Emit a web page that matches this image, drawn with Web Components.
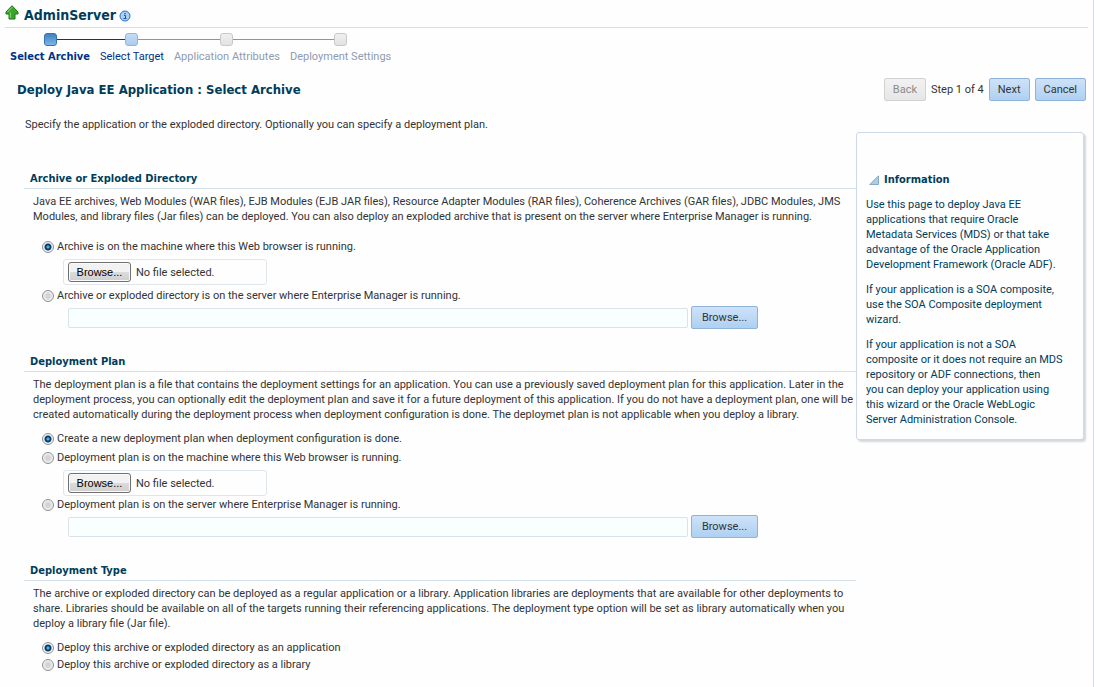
<!DOCTYPE html>
<html lang="en">
<head>
<meta charset="utf-8">
<title>Deploy Java EE Application : Select Archive</title>
<style>
  body {
    --bold-font: "DejaVu Sans Condensed", "DejaVu Sans", sans-serif;
    margin: 0;
    background: #fefefe;
    color: #333;
    font: 11px/15px Roboto, sans-serif;
  }
  .plan { --picker-bottom: 0px; }
  .plan radio-option + radio-option { margin-top: 2px; }
</style>
</head>
<body>

<deploy-page>
  <target-header slot="header">AdminServer</target-header>
  <step-train slot="header"></step-train>
  <wizard-bar slot="header">Deploy Java EE Application : Select Archive</wizard-bar>

  <span slot="intro">Specify the application or the exploded directory. Optionally you can specify a deployment plan.</span>

  <form-section spaced>
    <span slot="title">Archive or Exploded Directory</span>
    <span slot="text">Java EE archives, Web Modules (WAR files), EJB Modules (EJB JAR files), Resource Adapter Modules (RAR files), Coherence Archives (GAR files), JDBC Modules, JMS<br>Modules, and library files (Jar files) can be deployed. You can also deploy an exploded archive that is present on the server where Enterprise Manager is running.</span>
    <radio-option><input type="radio" name="archive" id="archive-local" checked><label slot="label" for="archive-local">Archive is on the machine where this Web browser is running.</label></radio-option>
    <file-picker></file-picker>
    <radio-option><input type="radio" name="archive" id="archive-server"><label slot="label" for="archive-server">Archive or exploded directory is on the server where Enterprise Manager is running.</label></radio-option>
    <server-path label="Archive path on server"></server-path>
  </form-section>

  <form-section class="plan">
    <span slot="title">Deployment Plan</span>
    <span slot="text">The deployment plan is a file that contains the deployment settings for an application. You can use a previously saved deployment plan for this application. Later in the<br>deployment process, you can optionally edit the deployment plan and save it for a future deployment of this application. If you do not have a deployment plan, one will be<br>created automatically during the deployment process when deployment configuration is done. The deploymet plan is not applicable when you deploy a library.</span>
    <radio-option><input type="radio" name="plan" id="plan-new" checked><label slot="label" for="plan-new">Create a new deployment plan when deployment configuration is done.</label></radio-option>
    <radio-option><input type="radio" name="plan" id="plan-local"><label slot="label" for="plan-local">Deployment plan is on the machine where this Web browser is running.</label></radio-option>
    <file-picker></file-picker>
    <radio-option><input type="radio" name="plan" id="plan-server"><label slot="label" for="plan-server">Deployment plan is on the server where Enterprise Manager is running.</label></radio-option>
    <server-path label="Plan path on server"></server-path>
  </form-section>

  <form-section>
    <span slot="title">Deployment Type</span>
    <span slot="text">The archive or exploded directory can be deployed as a regular application or a library. Application libraries are deployments that are available for other deployments to<br>share. Libraries should be available on all of the targets running their referencing applications. The deployment type option will be set as library automatically when you<br>deploy a library file (Jar file).</span>
    <radio-option><input type="radio" name="type" id="type-app" checked><label slot="label" for="type-app">Deploy this archive or exploded directory as an application</label></radio-option>
    <radio-option><input type="radio" name="type" id="type-lib"><label slot="label" for="type-lib">Deploy this archive or exploded directory as a library</label></radio-option>
  </form-section>

  <info-panel slot="aside">
    <span slot="title">Information</span>
    <p>Use this page to deploy Java EE<br>applications that require Oracle<br>Metadata Services (MDS) or that take<br>advantage of the Oracle Application<br>Development Framework (Oracle ADF).</p>
    <p>If your application is a SOA composite,<br>use the SOA Composite deployment<br>wizard.</p>
    <p>If your application is not a SOA<br>composite or it does not require an MDS<br>repository or ADF connections, then<br>you can deploy your application using<br>this wizard or the Oracle WebLogic<br>Server Administration Console.</p>
  </info-panel>
</deploy-page>

<script>
const define = (name, html, setup) => {
  const template = document.createElement('template');
  template.innerHTML = html;
  customElements.define(name, class extends HTMLElement {
    constructor() {
      super();
      this.attachShadow({ mode: 'open' }).append(template.content.cloneNode(true));
    }
    connectedCallback() {
      if (setup) setup(this, this.shadowRoot);
    }
  });
};

define('deploy-page', `
  <style>
    :host { display: block; box-sizing: border-box; min-height: 100vh; border-right: 1px solid #d3dae3; }
    .intro { padding: 17px 25px 0; line-height: 14px; }
    .columns { display: flex; align-items: flex-start; }
    main { flex: 1; min-width: 0; padding: 0 0 0 24px; }
    aside { flex: none; width: 228px; margin: 0 9px 0 0; }
    .sections { display: flex; flex-direction: column; gap: 25px; padding-top: 39px; }
  </style>
  <slot name="header"></slot>
  <div class="intro"><slot name="intro"></slot></div>
  <div class="columns">
    <main><div class="sections"><slot></slot></div></main>
    <aside><slot name="aside"></slot></aside>
  </div>
`);

define('target-header', `
  <style>
    :host { display: block; padding: 0 5px; }
    header { display: flex; align-items: center; height: 27px; border-bottom: 1px solid #d3dfe9; }
    h1 { margin: 3px 3px 0 5px; font: bold 14px/18px var(--bold-font); color: #003d5b; }
    .up { margin-bottom: 2px; }
    .info { margin-top: 5px; }
  </style>
  <header>
    <svg class="up" width="14" height="15" viewBox="0 0 14 15" aria-label="Up"><path d="M7 .7 13 7v2h-3v5H4V9H1V7z" fill="#3aa62b" stroke="#1c7518" stroke-linejoin="round"/><path d="M7 2.2 2.4 7.2M5.3 7.5v5.300" fill="none" stroke="#8fdc78" /></svg>
    <h1><slot></slot></h1>
    <svg class="info" width="12" height="12" viewBox="0 0 12 12" aria-label="Information"><circle cx="6" cy="6" r="5" fill="#a9d2f8" stroke="#2f72be"/><path d="M5 5.500h1.500v3M4.500 8.500h3" fill="none" stroke="#1458a6"/><path d="M5.300 3h1.400v1.200H5.300z" fill="#1458a6"/></svg>
  </header>
`);

define('step-train', `
  <style>
    :host { display: block; padding: 5px 5px 0; }
    ol { display: flex; margin: 0; padding: 0; list-style: none; }
    li { text-align: center; color: #8e9bb0; }
    .rail { display: flex; align-items: center; }
    .rail::before, .rail::after { content: ""; flex: 1; height: 1px; background: #8796ac; }
    li:first-child .rail::before, li:last-child .rail::after { background: none; }
    .done .rail::after, .next .rail::before { background: #003d6b; }
    i { box-sizing: border-box; width: 13px; height: 13px; border: 1px solid #c8c8c8; border-radius: 3px; background: linear-gradient(#f0f0f0, #e2e2e2); }
    .done i { border-color: #3a74ad; background: linear-gradient(#3c82c4, #7fb4e4); }
    .next i { border-color: #94b6dc; background: linear-gradient(#c5dcf5, #aaccf0); }
    .text { display: block; margin-top: 3px; padding: 0 5px; text-decoration: none; color: inherit; }
    a.text { color: #003286; }
    .done .text { font-family: var(--bold-font); font-weight: bold; }
  </style>
  <nav aria-label="Steps">
    <ol>
      <li class="done"><div class="rail"><i></i></div><a class="text" href="#archive">Select Archive</a></li>
      <li class="next"><div class="rail"><i></i></div><a class="text" href="#target">Select Target</a></li>
      <li><div class="rail"><i></i></div><span class="text">Application Attributes</span></li>
      <li><div class="rail"><i></i></div><span class="text">Deployment Settings</span></li>
    </ol>
  </nav>
`);

define('wizard-bar', `
  <style>
    :host { display: flex; align-items: center; justify-content: space-between; padding: 14px 7px 0 17px; }
    h2 { margin: 0; font: bold 13px/18px var(--bold-font); color: #003d5b; }
    .nav { display: flex; align-items: center; gap: 5px; }
  </style>
  <h2><slot></slot></h2>
  <div class="nav">
    <push-button disabled>Back</push-button>
    <span>Step 1 of 4</span>
    <push-button>Next</push-button>
    <push-button>Cancel</push-button>
  </div>
`);

define('push-button', `
  <style>
    :host { display: inline-block; }
    button { box-sizing: border-box; display: block; width: 100%; height: 23px; padding: 0 8px; border: 1px solid #8fb3d9; border-radius: 2px; background: linear-gradient(#cde2f8, #afd0f2); color: #333; font: inherit; }
    button:disabled { border-color: #d0d2d4; background: linear-gradient(#f2f2f2, #e6e6e6); color: #8a8a8a; }
  </style>
  <button type="button"><slot></slot></button>
`, (host, root) => {
  root.querySelector('button').disabled = host.hasAttribute('disabled');
});

define('form-section', `
  <style>
    :host { display: block; }
    h3 { margin: 0; padding: 0 6px 2px; font: bold 11px/15px var(--bold-font); color: #003d5b; border-bottom: 1px solid #d3dfe9; }
    p { margin: 5px 0 8px; padding: 0 0 0 9px; }
    .body { padding-left: 18px; }
    :host([spaced]) .body { padding-top: 6px; }
  </style>
  <section>
    <h3><slot name="title"></slot></h3>
    <p><slot name="text"></slot></p>
    <div class="body"><slot></slot></div>
  </section>
`);

define('radio-option', `
  <style>
    :host { display: flex; align-items: center; gap: 3px; height: 17px; }
    ::slotted(input) {
      appearance: none; flex: none; box-sizing: border-box; width: 12px; height: 12px; margin: 0;
      border: 1px solid #8c8f94; border-radius: 50%;
      background: radial-gradient(circle, #d4d4d4 0 2px, #f4f4f4 5px);
    }
    ::slotted(input:checked) { background: radial-gradient(circle at 50% 50%, #4db4e6 0 1px, #0d3d66 2px 3px, #f0f4f8 4px); }
  </style>
  <slot></slot><slot name="label"></slot>
`);

define('file-picker', `
  <style>
    :host { display: block; }
    .box { box-sizing: border-box; display: flex; align-items: center; gap: 5px; width: 204px; height: 26px; margin: 4px 0 var(--picker-bottom, 2px) 21px; padding: 0 4px; border: 1px solid #dfe6ec; border-radius: 3px; }
    button { box-sizing: border-box; width: 63px; height: 20px; padding: 0; border: 1px solid #707070; border-radius: 3px; box-shadow: inset 0 0 0 1px #fafafa; background: linear-gradient(#f2f2f2 50%, #dcdcdc 50%, #cfcfcf); color: #000; font: 11px "Liberation Sans", sans-serif; }
  </style>
  <div class="box">
    <button type="button">Browse...</button>
    <span>No file selected.</span>
    <input type="file" hidden>
  </div>
`, (host, root) => {
  const input = root.querySelector('input');
  root.querySelector('button').onclick = () => input.click();
  input.onchange = () => {
    root.querySelector('span').textContent = input.files[0]?.name ?? 'No file selected.';
  };
});

define('server-path', `
  <style>
    :host { display: flex; align-items: center; gap: 3px; margin: 2px 98px 0 26px; }
    input { flex: 1; min-width: 0; box-sizing: border-box; height: 20px; margin: 0; padding: 0 4px; border: 1px solid #dae3e8; border-radius: 2px; background: #f9fefe; color: inherit; font: inherit; }
    push-button { min-width: 67px; }
  </style>
  <input type="text">
  <push-button>Browse...</push-button>
`, (host, root) => {
  root.querySelector('input').setAttribute('aria-label', host.getAttribute('label'));
});

define('info-panel', `
  <style>
    :host { display: block; box-sizing: border-box; padding: 39px 9px 12px; border: 1px solid #cdd9e6; border-radius: 3px; background: #fefefe; box-shadow: 2px 2px 2px #d4d8dc; color: #003d5b; }
    h3 { display: flex; align-items: center; gap: 5px; margin: 0 0 10px 3px; font: bold 11px/15px var(--bold-font); }
    ::slotted(p) { margin: 0 0 10px; }
    ::slotted(p:last-child) { margin-bottom: 0; }
  </style>
  <section>
    <h3>
      <svg width="10" height="10" viewBox="0 0 10 10" aria-hidden="true"><path d="M9.500.8v8.700H.8z" fill="#b4cbdc" stroke="#84a9c9"/></svg>
      <slot name="title"></slot>
    </h3>
    <slot></slot>
  </section>
`);
</script>
</body>
</html>
